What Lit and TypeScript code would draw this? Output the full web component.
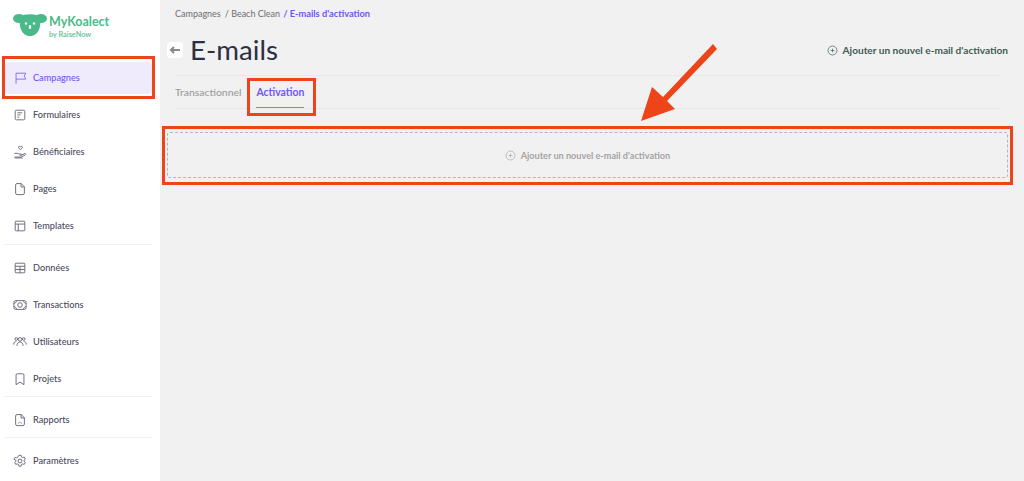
import { LitElement, html, css, svg } from "lit";
import { customElement } from "lit/decorators.js";

const I: Record<string, unknown> = {
  flag: svg`<path d="M3.500 14.500V2.500h11l-1.600 3.400 1.600 3.400h-11"/>`,
  form: svg`<rect x="2.500" y="2.500" width="11" height="11" rx="1.500"/><path d="M5 5.500h5.500M5 8h3.500M5 10.500h2"/>`,
  hand: svg`<path d="M8.500 2c-.8-1-2.500-.4-2.200.9.200.9 1.300 1.700 2.200 2.300.9-.6 2-1.400 2.200-2.300.3-1.300-1.400-1.900-2.200-.9z"/><path d="M1.500 9.500h3.500l2.200.8h2.300c.9 0 .9 1.500 0 1.500H7.500M9.800 11.500l3.700-1.700c1.100-.3 1.500.8.6 1.400l-4.300 2.600H1.500M2 14.800h9"/>`,
  page: svg`<path d="M4.500 1.800h4.900L13 5.500v7.200a1.700 1.700 0 0 1-1.700 1.700H4.700A1.700 1.700 0 0 1 3 12.700V3.300a1.500 1.500 0 0 1 1.500-1.500z"/><path d="M9.200 1.800v3.900H13"/>`,
  tpl: svg`<rect x="2.500" y="2.500" width="11" height="11" rx="1"/><path d="M2.500 5.800h11M6 5.800v7.700"/>`,
  data: svg`<rect x="2.500" y="2.500" width="11" height="11" rx="1"/><path d="M2.500 6h11M2.500 9.700h11M8 6v7.500"/>`,
  money: svg`<rect x="1" y="3" width="14" height="10" rx="2"/><circle cx="8" cy="8" r="2.600"/><path d="M1 6c1.800 0 3-1.200 3-3M15 6c-1.800 0-3-1.200-3-3M1 10c1.800 0 3 1.200 3 3M15 10c-1.800 0-3 1.200-3 3"/>`,
  users: svg`<circle cx="8" cy="5" r="2"/><circle cx="3.800" cy="4.500" r="1.500"/><circle cx="12.200" cy="4.500" r="1.500"/><path d="M4.500 12.500c0-2.700 1.500-4.500 3.500-4.500s3.500 1.800 3.500 4.500M.8 11c0-2.400 1.200-3.800 3-3.800M15.200 11c0-2.400-1.200-3.800-3-3.800"/>`,
  book: svg`<path d="M3.500 3.300a1.300 1.300 0 0 1 1.300-1.300h6.400a1.300 1.300 0 0 1 1.300 1.300V14.500L8 11.500l-4.500 3z"/>`,
  report: svg`<path d="M4.500 1.800h4.900L13 5.500v7.200a1.700 1.700 0 0 1-1.700 1.700H4.700A1.700 1.700 0 0 1 3 12.700V3.300a1.500 1.500 0 0 1 1.500-1.500z"/><path d="M9.200 1.800v3.900H13M5.500 11.500h1M8 10v1.500M9.500 11.500h1"/>`,
  gear: svg`<circle cx="8" cy="8" r="2.200"/><path d="M6.700 1.500h2.600l.4 1.800 1.400.8 1.700-.6 1.300 2.200-1.400 1.200v1.600l1.400 1.200-1.300 2.200-1.700-.6-1.400.8-.4 1.800H6.700l-.4-1.800-1.400-.8-1.700.6-1.300-2.200 1.400-1.200V7.200L1.100 6l1.300-2.200 1.700.6 1.400-.8z"/>`,
};

const plus = svg`<circle cx="8" cy="8" r="6.500"/><path d="M8 5.200v5.600M5.200 8h5.600"/>`;

const groups = [
  [["flag", "Campagnes", true], ["form", "Formulaires"], ["hand", "Bénéficiaires"], ["page", "Pages"], ["tpl", "Templates"]],
  [["data", "Données"], ["money", "Transactions"], ["users", "Utilisateurs"], ["book", "Projets"]],
  [["report", "Rapports"]],
  [["gear", "Paramètres"]],
] as [string, string, boolean?][][];

@customElement("app-root")
export class AppRoot extends LitElement {
  static styles = css`
    :host { display: block; width: 1024px; height: 481px; position: relative; overflow: hidden; background: #f1f1f1;
      font-family: Lato, "Liberation Sans", sans-serif; color: #3a3b4d; }
    .page { display: flex; height: 481px; }
    .side { width: 160px; flex: none; background: #fff; box-sizing: border-box; padding: 0 8px 0 5px; }
    .logo { display: flex; height: 59px; padding: 13px 0 0 8px; box-sizing: border-box; align-items: flex-start; gap: 2px; }
    .logo svg { width: 34px; height: 23px; flex: none; }
    .brand { display: flex; flex-direction: column; color: #4cb98a; }
    .brand b { font-size: 12.500px; font-weight: 700; line-height: 14px; margin-top: 2px; }
    .brand span { font-size: 7.300px; font-weight: 700; line-height: 8px; color: #6cc6a0; margin-top: 2px; }
    .group + .group { border-top: 1px solid #f1f1f1; padding-top: 4px; margin-bottom: -1px; }
    .item { display: flex; align-items: center; height: 37px; padding-left: 8px; gap: 6px; font-size: 9.200px; font-weight: 500; color: #4a4b5c; box-sizing: border-box; }
    .item svg { width: 14px; height: 14px; flex: none; fill: none; stroke: #5d5e70; stroke-width: 1; }
    .item.active { height: 32px; margin: 2.500px 0; background: #efebfd; border-radius: 4px; color: #6e56f0; }
    .item.active svg { stroke: #7a66ee; }
    .main { flex: 1; min-width: 0; padding: 7px 16px 0 7px; box-sizing: border-box; }
    .crumbs { display: flex; padding-left: 8px; font-size: 9px; line-height: 13px; color: #6d6d74; }
    .crumbs span { margin-right: 4px; }
    .crumbs b { color: #6e56f0; font-weight: 700; font-size: 9.270px; margin-left: -1px; }
    .head { display: flex; align-items: center; height: 55px; padding-top: 5px; box-sizing: border-box; }
    .back { width: 16px; height: 16px; background: #fff; border-radius: 4px; display: flex; align-items: center; justify-content: center; margin-right: 7px; }
    .back svg { width: 12px; height: 12px; fill: none; stroke: #8a8a8a; stroke-width: 2; }
    h1 { margin: 0; font-size: 27.700px; font-weight: 400; color: #2e2f42; flex: 1; line-height: 34px; }
    .add { display: flex; align-items: center; gap: 5px; font-size: 10.100px; font-weight: 700; color: #3d5b52; }
    .add svg, .dash svg { width: 11px; height: 11px; fill: none; stroke-width: 1; }
    .add svg { stroke: #3d5b52; }
    .tabs { margin: 0 8px; border-top: 1px solid #e7e7e7; border-bottom: 1px solid #e7e7e7; height: 32px; display: flex; gap: 15px; font-size: 10.400px; font-weight: 500; }
    .tab { display: flex; align-items: center; color: #9b9b9b; height: 32px; box-sizing: border-box; }
    .tab.on { color: #6f55ff; font-weight: 700; border-bottom: 1px solid #8f7cf8; }
    .dash { margin-top: 23px; height: 46px; box-sizing: border-box; border: 1px dashed #b5b5b5; border-radius: 3px; display: flex; align-items: center; justify-content: center; gap: 5px; font-size: 9.150px; font-weight: 700; color: #a4a4a4; }
    .dash svg { stroke: #a8a8a8; }
    .mark { position: absolute; box-sizing: border-box; border: 3px solid #ee4419; }
    .m1 { left: 2px; top: 56px; width: 153px; height: 43px; }
    .m2 { left: 247px; top: 78px; width: 69px; height: 38px; }
    .m3 { left: 162px; top: 126px; width: 851px; height: 59px; }
    .arrow { position: absolute; left: 630px; top: 35px; width: 100px; height: 95px; }
  `;

  render() {
    return html`
      <div class="page">
        <aside class="side">
          <div class="logo">
            <svg viewBox="0 0 34 23" fill="#4cb98a">
              <ellipse cx="6" cy="5.500" rx="6" ry="4.500"/>
              <ellipse cx="28" cy="5.500" rx="6" ry="4.500"/>
              <path d="M7 3.500c4-3 16-3 20 0 1.500 9-1 19.500-10 19.500S5.500 12.500 7 3.500z"/>
              <circle cx="13" cy="10.500" r="1.200" fill="#fff"/>
              <circle cx="21" cy="10.500" r="1.200" fill="#fff"/>
              <ellipse cx="17" cy="14" rx="1.300" ry="2" fill="#fff"/>
            </svg>
            <div class="brand"><b>MyKoalect</b><span>by RaiseNow</span></div>
          </div>
          ${groups.map(
            (g) => html`<div class="group">
              ${g.map(
                ([ic, label, on]) => html`<div class="item ${on ? "active" : ""}">
                  <svg viewBox="0 0 16 16">${I[ic]}</svg>${label}
                </div>`
              )}
            </div>`
          )}
        </aside>
        <main class="main">
          <div class="crumbs"><span>Campagnes</span><span>/ Beach Clean</span><b>/ E-mails d'activation</b></div>
          <div class="head">
            <div class="back"><svg viewBox="0 0 12 12"><path d="M11 6H2M5 3 2 6l3 3"/></svg></div>
            <h1>E-mails</h1>
            <div class="add"><svg viewBox="0 0 16 16">${plus}</svg>Ajouter un nouvel e-mail d'activation</div>
          </div>
          <div class="tabs">
            <div class="tab">Transactionnel</div>
            <div class="tab on">Activation</div>
          </div>
          <div class="dash"><svg viewBox="0 0 16 16">${plus}</svg>Ajouter un nouvel e-mail d'activation</div>
        </main>
      </div>
      <div class="mark m1"></div>
      <div class="mark m2"></div>
      <div class="mark m3"></div>
      <svg class="arrow" viewBox="0 0 100 95"><path d="M83 9 87 14 37 66 45 74 11 86 22 52 33 62z" fill="#ee4419"/></svg>
    `;
  }
}
